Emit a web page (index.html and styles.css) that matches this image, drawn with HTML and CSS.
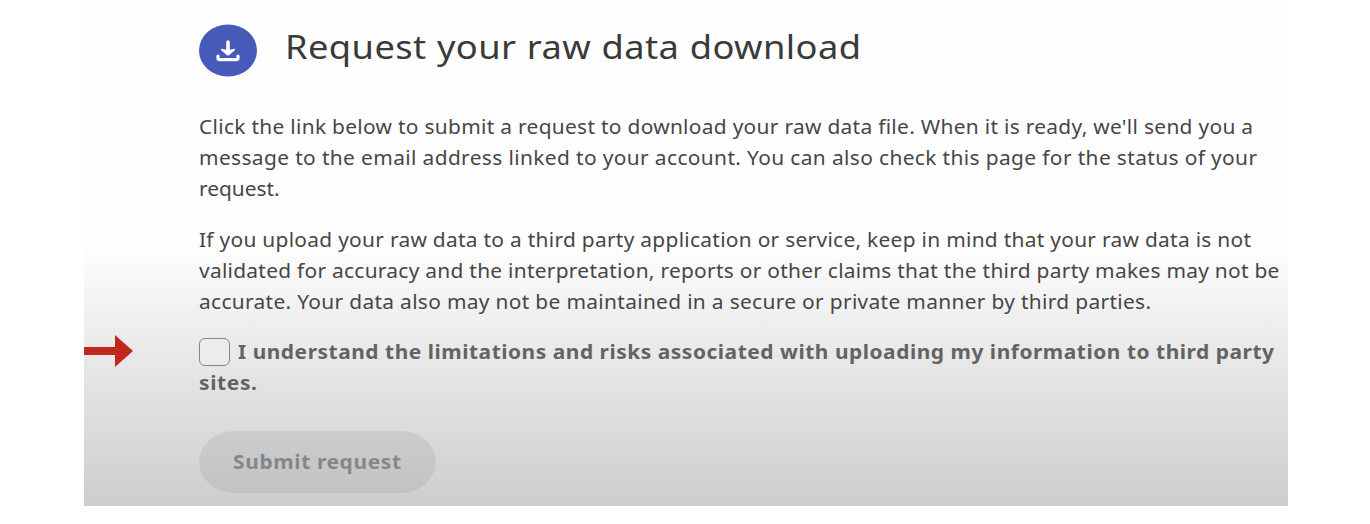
FILE: index.html
```html
<!DOCTYPE html>
<html lang="en">
<head>
<meta charset="utf-8">
<title>Request your raw data download</title>
<link rel="stylesheet" href="styles.css">
</head>
<body>
<main class="panel">
  <header class="heading">
    <svg class="badge" viewBox="0 0 58 52" aria-hidden="true">
      <ellipse cx="29" cy="26" rx="29" ry="26" fill="#465aba"/>
      <path d="M29 17.500v10" fill="none" stroke="#fff" stroke-width="3.6" stroke-linecap="round"/>
      <path d="M22.500 24.200l4.500 1h4l4.500-1q1.200 .6 0 1.700l-5.500 4.800q-1 .8-2 0l-5.500-4.800q-1.200-1.100 0-1.700z" fill="#fff"/>
      <path d="M19 31.500v2q0 1.700 1.700 1.700h16.600q1.700 0 1.700-1.700v-2" fill="none" stroke="#fff" stroke-width="3.2" stroke-linecap="round"/>
    </svg>
    <h1 class="title"><span class="line s33">Request your raw data download</span></h1>
  </header>
  <p class="text">
    <span class="line s27">Click the link below to submit a request to download your raw data file. When it is ready, we'll send you a</span>
    <span class="line s34">message to the email address linked to your account. You can also check this page for the status of your</span>
    <span class="line">request.</span>
  </p>
  <p class="text">
    <span class="line s26">If you upload your raw data to a third party application or service, keep in mind that your raw data is not</span>
    <span class="line s25">validated for accuracy and the interpretation, reports or other claims that the third party makes may not be</span>
    <span class="line s29">accurate. Your data also may not be maintained in a secure or private manner by third parties.</span>
  </p>
  <div class="consent">
    <svg class="arrow" viewBox="0 0 49 32" aria-hidden="true"><path d="M0 12h31V0l18 16-18 16V20H0z" fill="#c1271c"/></svg>
    <label class="consent-row"><span class="box"></span><span class="line s49">I understand the limitations and risks associated with uploading my information to third party</span></label>
    <span class="line s60">sites.</span>
  </div>
  <button class="submit" disabled><span class="line s58">Submit request</span></button>
</main>
</body>
</html>
```
FILE: styles.css
```css
body {
  margin: 0;
  background: #fff;
  font-family: "Noto Sans", sans-serif;
  color: #464646;
}
.panel {
  margin-left: 84px;
  width: 1204px;
  height: 506px;
  box-sizing: border-box;
  padding: 24px 0 0 114.5px;
  background: linear-gradient(#fefefe 245px, #efefef 320px, #cdcdcd 506px);
}
.heading { display: flex; gap: 28.5px; height: 88px; }
.badge { width: 58px; height: 53px; flex: none; }
.title { margin: 0; font-size: 33px; font-weight: 400; line-height: 46px; color: #3a3a3a; }

/* wide-set lettering */
.line {
  display: block;
  width: max-content;
  white-space: nowrap;
  transform: scaleX(1.1);
  transform-origin: 0 50%;
}
.s25 { letter-spacing: .249px; }
.s26 { letter-spacing: .259px; }
.s27 { letter-spacing: .271px; }
.s29 { letter-spacing: .291px; }
.s33 { letter-spacing: .36px; word-spacing: .5px; }
.s34 { letter-spacing: .339px; }
.s49 { letter-spacing: .486px; }
.s58 { letter-spacing: .58px; }
.s60 { letter-spacing: .6px; }

.text { margin: 0 0 20px; font-size: 19px; line-height: 31px; }
.text + .text { margin-bottom: 19px; }
.consent {
  position: relative;
  font-size: 19px;
  line-height: 31px;
  font-weight: 700;
  color: #636363;
}
.consent-row { display: flex; align-items: center; gap: 8.5px; height: 31px; }
.box {
  box-sizing: border-box;
  width: 31px;
  height: 28px;
  flex: none;
  margin-top: -1px;
  border: 1.5px solid #85868a;
  border-radius: 6px;
  background: #ebecee;
}
.arrow { position: absolute; left: -114.5px; top: -2.5px; width: 49px; height: 32px; }
.submit {
  display: block;
  margin: 32px 0 0;
  width: 237px;
  height: 62px;
  padding: 0 0 0 34.5px;
  border: 0;
  border-radius: 36px / 31px;
  background: linear-gradient(#cbcccd, #c2c3c4);
  font: 700 19px/31px "Noto Sans", sans-serif;
  color: #858688;
  text-align: left;
}
```
